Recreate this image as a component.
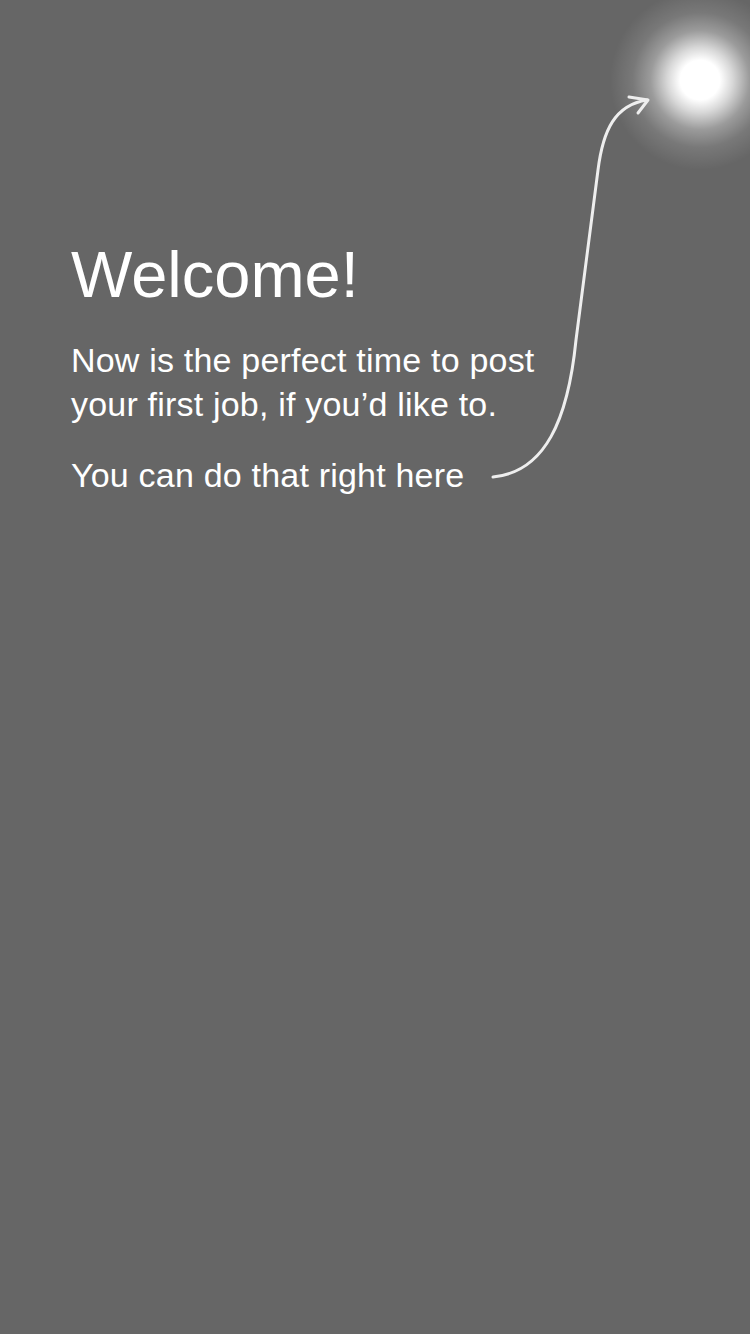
export default function App() {
  return (
    <div className="relative w-[750px] h-[1334px] bg-[#666666] overflow-hidden" style={{ fontFamily: '"Liberation Sans", Arial, sans-serif' }}>
      <div className="absolute left-[610px] top-[-10px] w-[180px] h-[180px]" style={{ background: 'radial-gradient(closest-side, rgba(255,255,255,1) 0%, rgba(255,255,255,1) 22%, rgba(255,255,255,0.75) 36%, rgba(255,255,255,0.35) 55%, rgba(255,255,255,0.12) 75%, rgba(255,255,255,0) 100%)' }} />
      <svg className="absolute left-0 top-0" width="750" height="600" viewBox="0 0 750 600" fill="none">
        <path d="M493 477 C545 472 568 420 576 340 L598 170 C603 130 615 105 647 100" stroke="#eeeeee" strokeWidth="3" strokeLinecap="round" />
        <path d="M629 97 L648 100 L638 113" stroke="#eeeeee" strokeWidth="3" strokeLinecap="round" strokeLinejoin="round" />
      </svg>
      <div className="relative pt-[243px] pl-[71px] text-white">
        <h1 className="text-[65px] leading-[64px]">Welcome!</h1>
        <p className="mt-[31px] text-[34px] leading-[44px] tracking-[0.2px]">
          Now is the perfect time to post
          <br />
          your first job, if you’d like to.
        </p>
        <p className="mt-[27px] text-[34px] leading-[44px] tracking-[0.2px]">You can do that right here</p>
      </div>
    </div>
  );
}
